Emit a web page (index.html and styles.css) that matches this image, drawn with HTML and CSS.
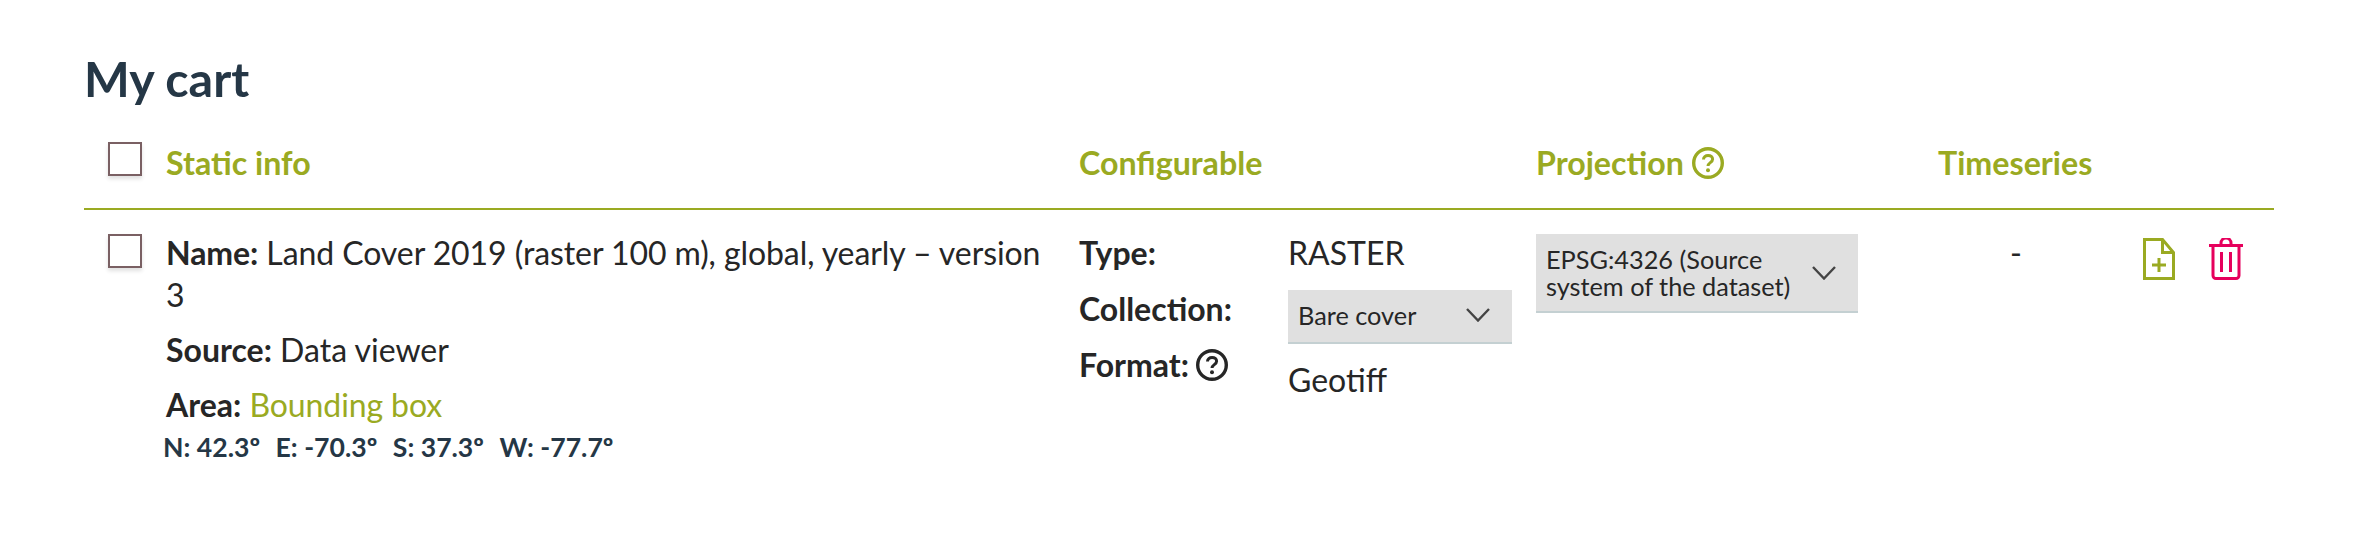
FILE: index.html
```html
<!DOCTYPE html>
<html>
    <head>
        <meta charset="utf-8">
        <title>My cart</title>
        <link rel="stylesheet" href="styles.css">
    </head>
    <body>
        <div class="cart">
            <h1 class="cart-title">My cart</h1>

            <div class="cart-grid cart-head">
                <div class="check-cell"><span class="checkbox"></span></div>
                <div>Static info</div>
                <div>Configurable</div>
                <div class="head-help">
                    Projection
                    <svg class="help-icon" viewBox="0 0 32 32">
                        <circle cx="16" cy="16" r="14.3" fill="none" stroke="currentColor" stroke-width="3.4"/>
                        <path d="M11.5 12.6c0-2.6 2-4.2 4.6-4.2s4.5 1.5 4.5 3.8c0 3.4-4.6 3.4-4.6 6.8" fill="none" stroke="currentColor" stroke-width="3"/>
                        <circle cx="16" cy="23.2" r="2" fill="currentColor"/>
                    </svg>
                </div>
                <div>Timeseries</div>
                <div></div>
            </div><!-- end cart-head -->

            <div class="cart-grid cart-row">
                <div class="check-cell"><span class="checkbox row-checkbox"></span></div>

                <div class="info-cell">
                    <p class="info-name"><b>Name:</b> Land Cover 2019 (raster 100 m), global, yearly – version 3</p>
                    <p class="info-line"><b>Source:</b> Data viewer</p>
                    <p class="info-line"><b>Area:</b> <a class="area-link">Bounding box</a></p>
                    <div class="coords">
                        <span>N: 42.3º</span>
                        <span>E: -70.3º</span>
                        <span>S: 37.3º</span>
                        <span>W: -77.7º</span>
                    </div>
                </div>

                <div class="config-cell">
                    <div class="config-labels">
                        <div>Type:</div>
                        <div>Collection:</div>
                        <div class="format-label">
                            Format:
                            <svg class="help-icon" viewBox="0 0 32 32">
                                <circle cx="16" cy="16" r="14.3" fill="none" stroke="currentColor" stroke-width="3.4"/>
                                <path d="M11.5 12.6c0-2.6 2-4.2 4.6-4.2s4.5 1.5 4.5 3.8c0 3.4-4.6 3.4-4.6 6.8" fill="none" stroke="currentColor" stroke-width="3"/>
                                <circle cx="16" cy="23.2" r="2" fill="currentColor"/>
                            </svg>
                        </div>
                    </div>
                    <div class="config-values">
                        <div>RASTER</div>
                        <div class="dropdown dropdown-collection">
                            <span>Bare cover</span>
                            <svg class="chevron" viewBox="0 0 24 14"><path d="M1 1l11 11.5L23 1" fill="none" stroke="#444" stroke-width="2.4"/></svg>
                        </div>
                        <div class="format-value">Geotiff</div>
                    </div>
                </div>

                <div class="projection-cell">
                    <div class="dropdown dropdown-projection">
                        <span>EPSG:4326 (Source system of the dataset)</span>
                        <svg class="chevron" viewBox="0 0 24 14"><path d="M1 1l11 11.5L23 1" fill="none" stroke="#444" stroke-width="2.4"/></svg>
                    </div>
                </div>

                <div class="series-cell">-</div>

                <div class="actions-cell">
                    <svg class="file-icon" viewBox="0 0 32 42">
                        <path d="M1.5 1.5h18l11 13v26h-29z" fill="none" stroke="currentColor" stroke-width="3"/>
                        <path d="M19.5 1.5v13h11" fill="none" stroke="currentColor" stroke-width="3"/>
                        <path d="M16 20v14M9 27h14" fill="none" stroke="currentColor" stroke-width="3"/>
                    </svg>
                    <svg class="trash-icon" viewBox="0 0 34 42">
                        <path d="M0 7.5h34" fill="none" stroke="currentColor" stroke-width="3"/>
                        <path d="M12 7V5a5 5 0 0 1 10 0v2" fill="none" stroke="currentColor" stroke-width="3"/>
                        <path d="M4 7.5v30a3 3 0 0 0 3 3h20a3 3 0 0 0 3-3v-30" fill="none" stroke="currentColor" stroke-width="3"/>
                        <path d="M12.5 14v20M21.5 14v20" fill="none" stroke="currentColor" stroke-width="3"/>
                    </svg>
                </div>
            </div><!-- end cart-row -->
        </div><!-- end cart -->
    </body>
</html>
```

FILE: styles.css
```css
*{
    box-sizing: border-box;
}

body{
    margin: 0;
    background-color: #fff;
    color: #262626;
    font-family: Lato, "Liberation Sans", sans-serif;
    font-size: 32px;
}

.cart{
    padding: 48px 92px 0 84px;
}

.cart-title{
    margin: 0;
    font-size: 48.4px;
    font-weight: 700;
    line-height: 60px;
    color: #253746;
}

.cart-grid{
    display: grid;
    grid-template-columns: 82px 913px 457px 402px 156px 1fr;
}

.cart-head{
    margin-top: 34px;
    padding-bottom: 24px;
    border-bottom: 2px solid #9aaa22;
    color: #9aaa22;
    font-size: 32.2px;
    font-weight: 700;
    line-height: 42px;
}

.head-help{
    display: flex;
    align-items: center;
    gap: 8px;
}

.check-cell{
    padding-left: 24px;
}

.checkbox{
    display: block;
    width: 34px;
    height: 34px;
    border: 2px solid #7a6063;
    background-color: #fff;
    box-shadow: 0 3px 4px rgba(0,0,0,.12);
}

.row-checkbox{
    margin-top: 24px;
}

.help-icon{
    display: block;
    flex: none;
    width: 32px;
    height: 32px;
}

/* static info */
.info-cell{
    padding: 22px 30px 0 0;
    line-height: 42px;
}

.info-name, .info-line{
    margin: 0;
}

.info-name{
    letter-spacing: -0.08px;
}

.info-line{
    margin-top: 13px;
}

.area-link{
    color: #9aaa22;
    letter-spacing: -0.1px;
}

.coords{
    display: flex;
    gap: 15.5px;
    margin: 6px 0 0 -3px;
    color: #253746;
    font-size: 26.6px;
    font-weight: 700;
    line-height: 30px;
}

/* configurable */
.config-cell{
    display: flex;
    padding-top: 15px;
    line-height: 56px;
}

.config-labels{
    width: 209px;
    font-weight: 700;
}

.format-label{
    display: flex;
    align-items: center;
    gap: 7px;
}

.config-values{
    width: 224px;
}

.format-value{
    margin-top: 8px;
}

.dropdown{
    display: flex;
    align-items: center;
    justify-content: space-between;
    background-color: #e0e0e0;
    border-bottom: 2px solid #c4d0d2;
    font-size: 25.3px;
}

.dropdown-collection{
    height: 54px;
    margin-top: 9px;
    padding: 0 22px 2px 10px;
    line-height: 30px;
}

.dropdown-projection{
    width: 322px;
    height: 79px;
    margin-top: 24px;
    padding: 0 22px 0 10px;
    line-height: 27px;
}

.dropdown-projection span{
    width: 260px;
}

.chevron{
    flex: none;
    width: 24px;
    height: 14px;
}

/* timeseries and actions */
.series-cell{
    padding-top: 15px;
    line-height: 56px;
    text-align: center;
}

.actions-cell{
    display: flex;
    align-items: flex-start;
    gap: 34px;
    padding: 28px 0 0 49px;
}

.file-icon{
    width: 32px;
    height: 42px;
    color: #9aaa22;
}

.trash-icon{
    width: 34px;
    height: 42px;
    color: #e6005c;
}
```
